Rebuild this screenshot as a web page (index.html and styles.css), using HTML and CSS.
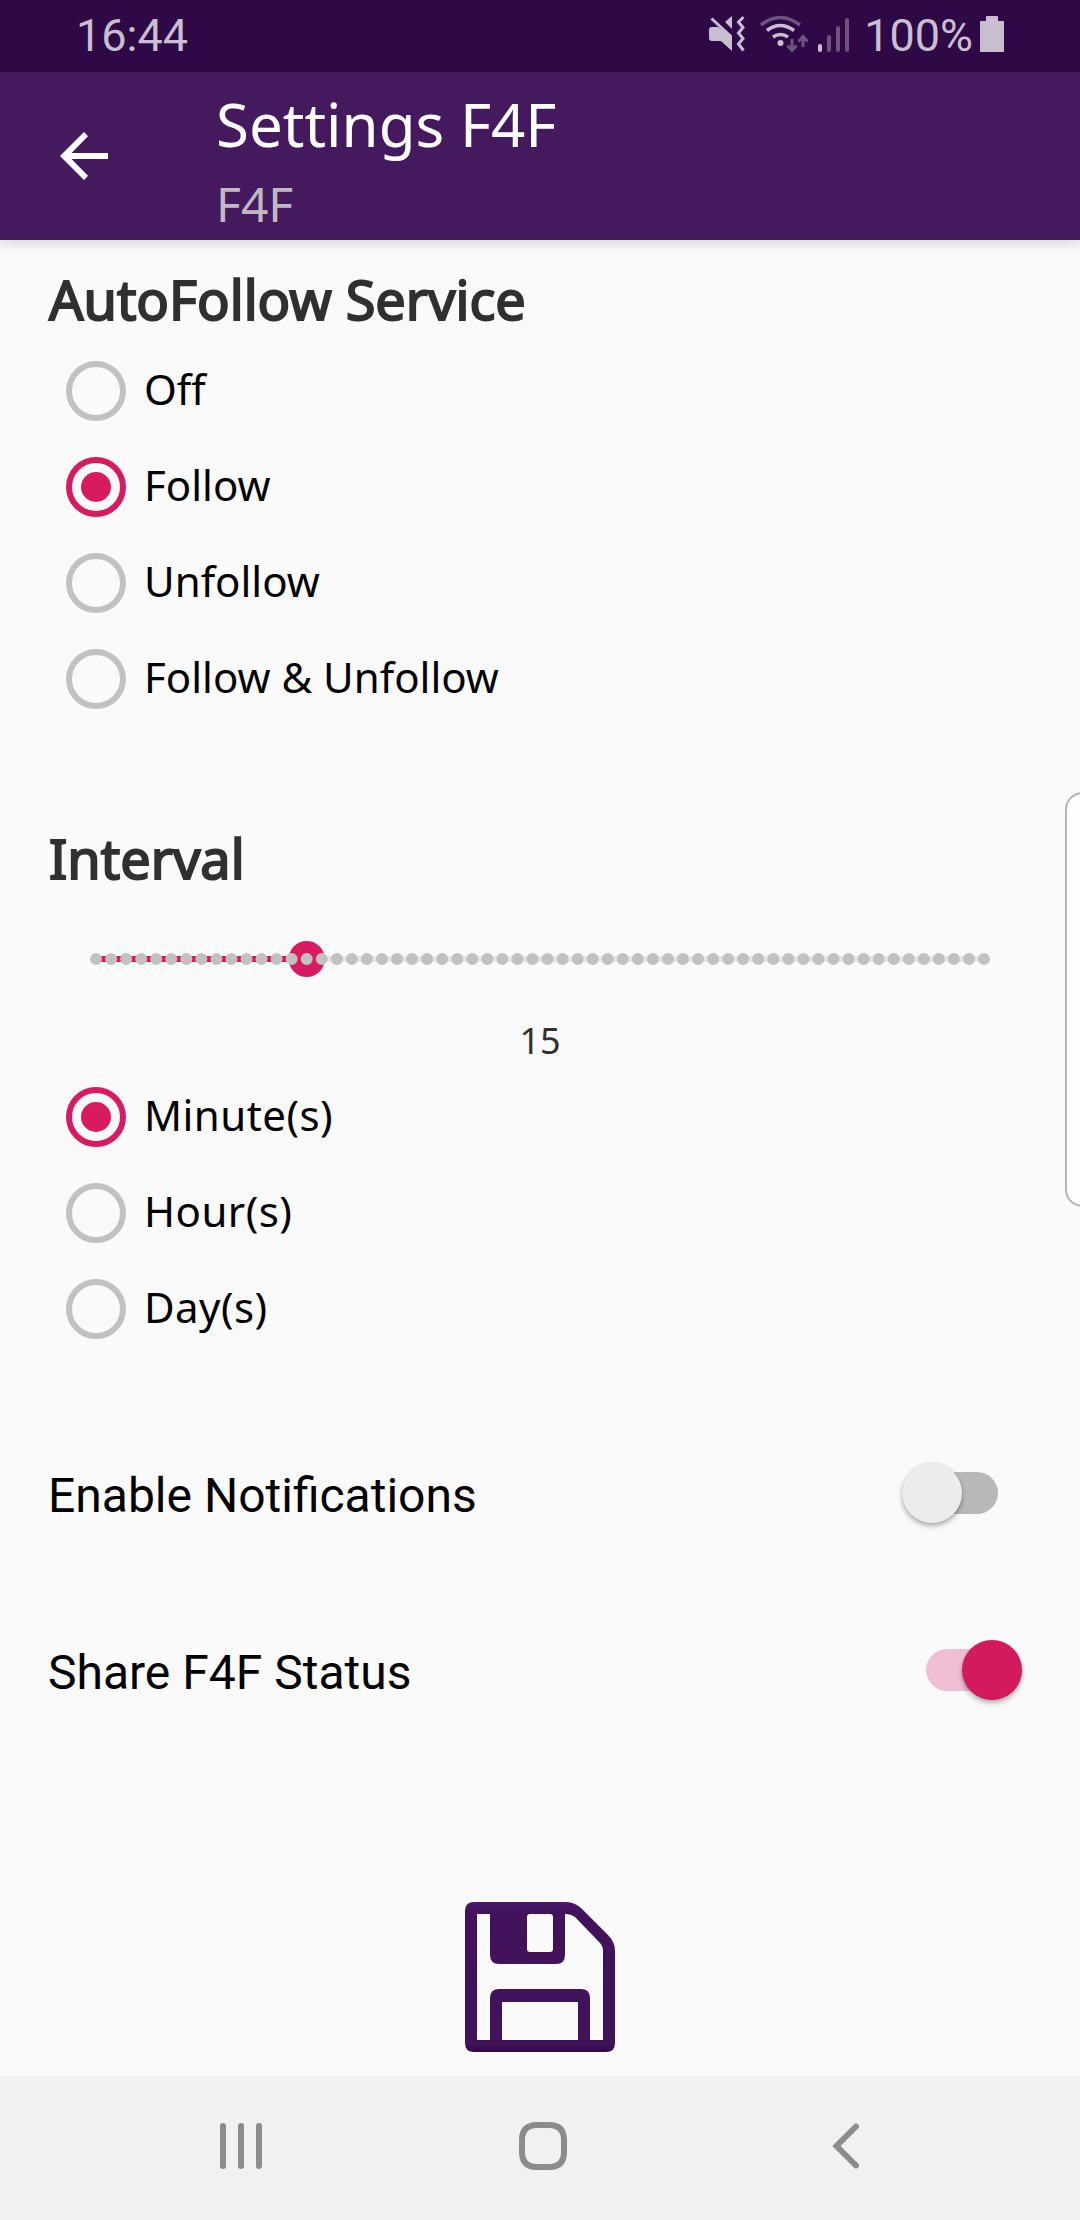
FILE: index.html
```html
<!DOCTYPE html>
<html lang="en">
<head>
<meta charset="utf-8">
<title>Settings F4F</title>
<link rel="stylesheet" href="styles.css">
</head>
<body>
<div class="screen">
  <div class="status-bar">
    <span class="clock">16:44</span>
    <svg class="status-icons" width="146" height="72" viewBox="0 0 146 72">
      <g class="bright">
        <path d="M0 30q0-3 3-3h6l14 9v15L12 41H3q-3 0-3-3z"/>
        <path d="M23 16v13l-7-7z"/>
        <path class="line" d="M2.500 18.500L22 36.500" stroke-width="3"/>
        <path class="line" d="M34.500 17l-5 5 4.500 5.500-4.500 5.500 4.500 5.500-4.500 5.500 5 6.500" stroke-width="3"/>
        <path class="line" d="M58 30.500q13-10 27 0" stroke-width="3.500"/>
        <path class="line" d="M64 37q7.500-5 15 0" stroke-width="3.500"/>
        <circle cx="71.500" cy="43" r="3"/>
        <rect x="109" y="44" width="4" height="8" rx="2"/>
      </g>
      <g class="dim">
        <path class="line" d="M52 25q19-15 39 0" stroke-width="3.500"/>
        <path class="line" d="M83 39v11M78.500 45.500l4.500 5 4.500-5M94 47V37M89.500 41.500l4.500-5 4.500 5" stroke-width="3"/>
        <rect x="118" y="35" width="4" height="17" rx="2"/>
        <rect x="127" y="26" width="4" height="26" rx="2"/>
        <rect x="136" y="18" width="4" height="34" rx="2"/>
      </g>
    </svg>
    <span class="percent">100%</span>
    <svg class="battery" width="24" height="72" viewBox="0 0 24 72">
      <path d="M1 21h5v-4q0-1 1-1h10q1 0 1 1v4h5q1 0 1 1v29q0 1-1 1H1q-1 0-1-1V22q0-1 1-1z"/>
    </svg>
  </div>

  <header class="app-bar">
    <svg class="back" width="48" height="48" viewBox="0 0 48 48">
      <path d="M48 21v6H11.500L28 43.700 24 48 0 24 24 0l4 4.300L11.500 21z"/>
    </svg>
    <div class="titles">
      <h1 class="title">Settings F4F</h1>
      <div class="subtitle">F4F</div>
    </div>
  </header>

  <main class="content">
    <h2 class="heading">AutoFollow Service</h2>
    <div class="radio-group">
      <div class="radio"><span class="ring"></span><span class="label">Off</span></div>
      <div class="radio"><span class="ring checked"></span><span class="label">Follow</span></div>
      <div class="radio"><span class="ring"></span><span class="label">Unfollow</span></div>
      <div class="radio"><span class="ring"></span><span class="label">Follow &amp; Unfollow</span></div>
    </div>

    <h2 class="heading interval">Interval</h2>
    <svg class="slider" width="900" height="36" viewBox="0 0 900 36">
      <path class="track" d="M6 18h888"/>
      <path class="progress" d="M6 18h210.700"/>
      <circle class="thumb" cx="216.700" cy="18" r="18"/>
      <path class="ticks" d="M6 18h888.100"/>
    </svg>
    <div class="value">15</div>
    <div class="radio-group units">
      <div class="radio"><span class="ring checked"></span><span class="label">Minute(s)</span></div>
      <div class="radio"><span class="ring"></span><span class="label">Hour(s)</span></div>
      <div class="radio"><span class="ring"></span><span class="label">Day(s)</span></div>
    </div>

    <div class="toggle-row off">
      <span class="toggle-label">Enable Notifications</span>
      <span class="switch"><span class="knob"></span></span>
    </div>
    <div class="toggle-row on">
      <span class="toggle-label">Share F4F Status</span>
      <span class="switch"><span class="knob"></span></span>
    </div>

    <svg class="save" width="150" height="150" viewBox="0 0 150 150">
      <defs>
        <linearGradient id="edge" x1="0" y1="0" x2="0" y2="1">
          <stop offset="0" stop-color="#4b1769"/>
          <stop offset=".06" stop-color="#42135c"/>
          <stop offset=".95" stop-color="#41135a"/>
          <stop offset="1" stop-color="#2c0940"/>
        </linearGradient>
      </defs>
      <path fill="url(#edge)" fill-rule="evenodd" d="M9 0h92q9 0 16 7l26 26q7 7 7 16v92q0 9-9 9H9q-9 0-9-9V9Q0 0 9 0zM12 12v126h13V96q0-9 9-9h82q9 0 9 9v42h13V49q0-5-3-8L110 15q-4-3-10-3v41q0 9-9 9H34q-9 0-9-9V12zM65 12q-3 0-3 3v32q0 3 3 3h20q3 0 3-3V15q0-3-3-3zM37 100v38h76v-38z"/>
    </svg>
  </main>

  <nav class="nav-bar">
    <svg width="42" height="48" viewBox="0 0 42 48"><path d="M3 4v40M21 4v40M39 4v40"/></svg>
    <svg class="home" width="48" height="48" viewBox="0 0 48 48"><path d="M18 3h12q15 0 15 15v12q0 15-15 15H18Q3 45 3 30V18Q3 3 18 3z"/></svg>
    <svg width="28" height="48" viewBox="0 0 28 48"><path d="M24 4.500L4.500 24 24 43.500"/></svg>
  </nav>

  <div class="edge-panel"></div>
</div>
</body>
</html>
```
FILE: styles.css
```css
* { box-sizing: border-box; }

body {
  margin: 0;
  font-family: "Noto Sans", sans-serif;
  background: #fafafa;
}

.screen {
  position: relative;
  display: flex;
  flex-direction: column;
  width: 1080px;
  height: 2220px;
  overflow: hidden;
  color: #000;
}

.status-bar {
  display: flex;
  align-items: center;
  height: 72px;
  padding: 0 76px;
  background: #2e0945;
  color: #cabfd1;
  font: 45px/72px Roboto, sans-serif;
}

.status-icons { margin-left: auto; margin-right: 9px; }
.bright { fill: #cabfd1; stroke: none; }
.bright .line { fill: none; stroke: #cabfd1; }
.dim { fill: #6f537f; }
.dim .line { fill: none; stroke: #6f537f; }
.percent { margin-right: 7px; }
.battery { fill: #cabfd1; }

.app-bar {
  display: flex;
  align-items: flex-start;
  height: 168px;
  background: #44195e;
  box-shadow: 0 3px 12px rgba(0, 0, 0, .16);
  color: #fff;
}

.back { margin: 60px 108px 0 60px; fill: #fff; }
.titles { padding-top: 11px; }
.title { margin: 0 0 6px; font-size: 60px; font-weight: 400; line-height: 82px; }
.subtitle { font-size: 48px; line-height: 66px; color: #c1b9c1; }

.content {
  display: flex;
  flex-direction: column;
  height: 1836px;
  padding: 21px 48px 0;
}

.heading {
  margin: 0 0 6px;
  padding-left: 1px;
  font-size: 54px;
  font-weight: 400;
  line-height: 76px;
  color: #303030;
  -webkit-text-stroke: 2px #303030;
}
.heading.interval { margin: 93px 0 45px; }

.radio { display: flex; align-items: center; height: 96px; padding-left: 18px; }

.ring {
  display: flex;
  align-items: center;
  justify-content: center;
  width: 60px;
  height: 60px;
  border: 6px solid #c1c1c1;
  border-radius: 50%;
}
.ring.checked { border-color: #d81b60; }
.ring.checked::after {
  content: "";
  width: 30px;
  height: 30px;
  border-radius: 50%;
  background: #d81b60;
}

.label { padding: 0 0 5px 18px; font-size: 42px; line-height: 58px; }
.units .label { letter-spacing: .45px; }

.slider { flex: none; margin-left: 42px; fill: none; }
.track { stroke: #e6e6e6; stroke-width: 6; }
.progress { stroke: #d81b60; stroke-width: 6; }
.thumb { fill: #d81b60; }
.ticks {
  stroke: #c1c1c1;
  stroke-width: 12;
  stroke-linecap: round;
  stroke-dasharray: 0 15.0508;
}

.value {
  margin: 39px 0 3px;
  font-size: 36px;
  line-height: 50px;
  text-align: center;
  color: #303030;
}

.toggle-row {
  display: flex;
  align-items: center;
  justify-content: space-between;
  height: 84px;
}
.toggle-row.off { margin-top: 94px; padding-right: 34px; }
.toggle-row.on { margin-top: 93px; padding-right: 10px; }
.toggle-label { padding-top: 5px; font: 48px/56px Roboto, sans-serif; }

.switch {
  display: flex;
  align-items: center;
  width: 84px;
  height: 42px;
  border-radius: 21px;
}
.knob {
  flex: none;
  width: 60px;
  height: 60px;
  border-radius: 50%;
  box-shadow: 0 3px 5px rgba(0, 0, 0, .3), 0 0 2px rgba(0, 0, 0, .1);
}
.off .switch { background: #b8b8b8; }
.off .knob { margin-left: -12px; background: #ececec; }
.on .switch { justify-content: flex-end; width: 96px; background: #f1bfd3; }
.on .knob { background: #d31a5e; }

.save { flex: none; align-self: center; margin-top: 190px; }

.nav-bar {
  display: flex;
  align-items: center;
  justify-content: space-between;
  height: 144px;
  padding: 0 220px 4px;
  background: #f1f1f1;
}
.nav-bar svg {
  fill: none;
  stroke: #8c8c8c;
  stroke-width: 6;
  stroke-linecap: round;
  stroke-linejoin: miter;
}
.nav-bar .home { margin-right: 8px; }

/* Handle of the edge panel, floating over the page */
.edge-panel {
  position: absolute;
  top: 792px;
  right: -20px;
  width: 35px;
  height: 415px;
  border: 2px solid #b5b5b5;
  border-radius: 18px;
  background: #fdfdfd;
}
```
